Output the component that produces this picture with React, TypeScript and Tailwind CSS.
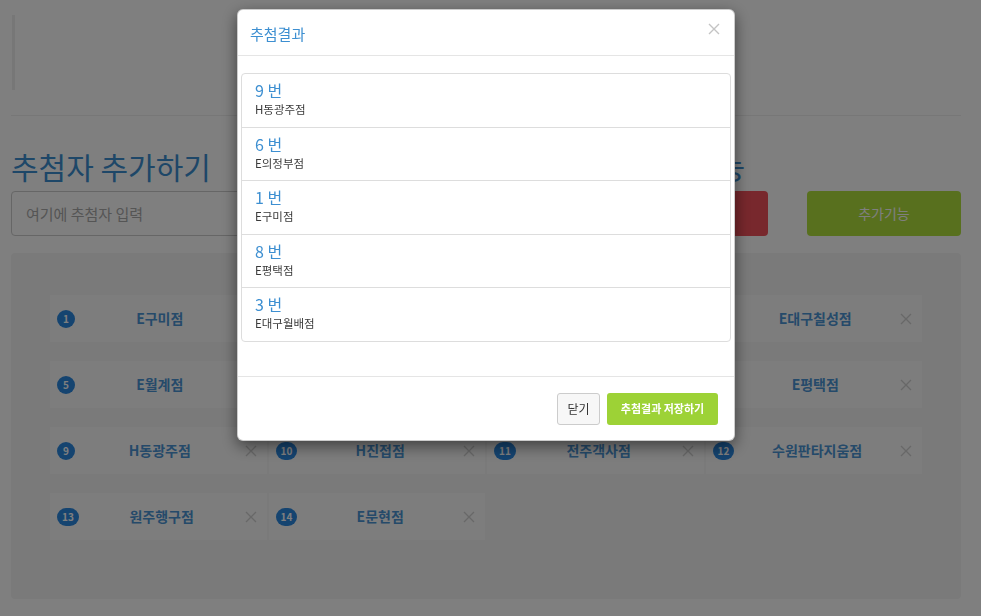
import React from "react";

const font = "font-['Noto_Sans_CJK_KR','Noto_Sans',sans-serif]";

type Entry = { no: number; name: string };

const entries: Entry[] = [
  { no: 1, name: "E구미점" },
  { no: 2, name: "E인천점" },
  { no: 3, name: "E대구월배점" },
  { no: 4, name: "E대구칠성점" },
  { no: 5, name: "E월계점" },
  { no: 6, name: "E의정부점" },
  { no: 7, name: "H대전점" },
  { no: 8, name: "E평택점" },
  { no: 9, name: "H동광주점" },
  { no: 10, name: "H진접점" },
  { no: 11, name: "전주객사점" },
  { no: 12, name: "수원판타지움점" },
  { no: 13, name: "원주행구점" },
  { no: 14, name: "E문현점" },
];

const results: Entry[] = [
  { no: 9, name: "H동광주점" },
  { no: 6, name: "E의정부점" },
  { no: 1, name: "E구미점" },
  { no: 8, name: "E평택점" },
  { no: 3, name: "E대구월배점" },
];

function Cross({ className }: { className?: string }) {
  return (
    <svg viewBox="0 0 12 12" className={className} fill="none" stroke="currentColor" strokeWidth={1.4}>
      <path d="M1 1L11 11M11 1L1 11" />
    </svg>
  );
}

function Card({ entry }: { entry: Entry }) {
  return (
    <div className="flex items-center h-[47px] bg-[#fbfbfb] pl-[7px] pr-[10px]">
      <span
        className={`h-[18px] min-w-[18px] rounded-full bg-[#2a88e0] text-white text-[10px] font-bold flex items-center justify-center leading-none ${
          entry.no > 9 ? "px-[5px]" : ""
        }`}
      >
        {entry.no}
      </span>
      <span className="flex-1 text-center text-[14px] font-bold text-[#4b94d4]">{entry.name}</span>
      <Cross className="w-[12px] h-[12px] text-[#d0d0d0]" />
    </div>
  );
}

function ResultModal() {
  return (
    <div className="fixed inset-0 z-50">
      <div className="absolute inset-0 bg-black/50" />
      <div className="absolute left-[237px] top-[9px] w-[498px] bg-white border border-black/20 rounded-[6px] shadow-[0_5px_15px_rgba(0,0,0,0.5)]">
        <div className="flex items-center justify-between h-[46px] pl-[12px] pr-[14px] border-b border-[#e5e5e5]">
          <h4 className="text-[15px] text-[#3d8fd1] leading-none mt-[1px]">추첨결과</h4>
          <Cross className="w-[12px] h-[12px] text-[#c4c4c4] -mt-[7px]" />
        </div>

        <div className="px-[3px] pt-[17px] pb-[34px]">
          <div className="border border-[#dddddd] rounded-[4px]">
            {results.map((r, i) => (
              <div
                key={r.no}
                className={`pl-[13px] pt-[5px] pb-[8.5px] ${i > 0 ? "border-t border-[#dddddd]" : ""}`}
              >
                <div className="text-[16px] leading-[22px] text-[#3d8fd1]">{r.no} 번</div>
                <div className="text-[11.5px] leading-[17px] text-[#3a3a3a]">{r.name}</div>
              </div>
            ))}
          </div>
        </div>

        <div className="flex justify-end gap-[7px] border-t border-[#e5e5e5] pt-[16px] pb-[15px] pr-[16px]">
          <button className="h-[32px] w-[43px] rounded-[3px] border border-[#cccccc] bg-[#f7f7f7] text-[12px] text-[#333333]">
            닫기
          </button>
          <button className="h-[32px] w-[111px] rounded-[3px] bg-[#9dd236] text-[11px] font-bold text-white">
            추첨결과 저장하기
          </button>
        </div>
      </div>
    </div>
  );
}

export default function App() {
  return (
    <div className={`${font} min-h-screen bg-white`}>
      <div className="pl-[11px] pr-[20px] pt-[15px] pb-[16px]">
        <div className="h-[75px] border-l-[3px] border-[#eeeeee] ml-px" />
        <div className="mt-[25px] h-px bg-[#eeeeee]" />

        <div className="mt-[34px] flex gap-[20px]">
          <div className="flex-1">
            <h2 className="text-[30px] leading-[33px] text-[#3d8fd1]">추첨자 추가하기</h2>
            <input
              className="mt-[8px] w-full h-[45px] rounded-[4px] border border-[#cccccc] pl-[14px] text-[15px] placeholder:text-[#aaaaaa]"
              placeholder="여기에 추첨자 입력"
            />
          </div>
          <div className="w-[347px]">
            <h3 className="ml-[14px] text-[30px] leading-[33px] text-[#3d8fd1] whitespace-nowrap">추첨 기능</h3>
            <div className="mt-[8px] flex gap-[39px]">
              <button className="h-[45px] w-[154px] rounded-[4px] bg-[#f0505a] text-white text-[14px]">추첨하기</button>
              <button className="h-[45px] w-[154px] rounded-[4px] bg-[#b0e03c] text-white text-[14px]">추가기능</button>
            </div>
          </div>
        </div>

        <div className="mt-[17px] rounded-[4px] bg-[#f4f4f4] px-[39px] pt-[42px] pb-[59px]">
          <div className="grid grid-cols-4 gap-x-[2px] gap-y-[19px]">
            {entries.map((e) => (
              <Card key={e.no} entry={e} />
            ))}
          </div>
        </div>
      </div>

      <ResultModal />
    </div>
  );
}
